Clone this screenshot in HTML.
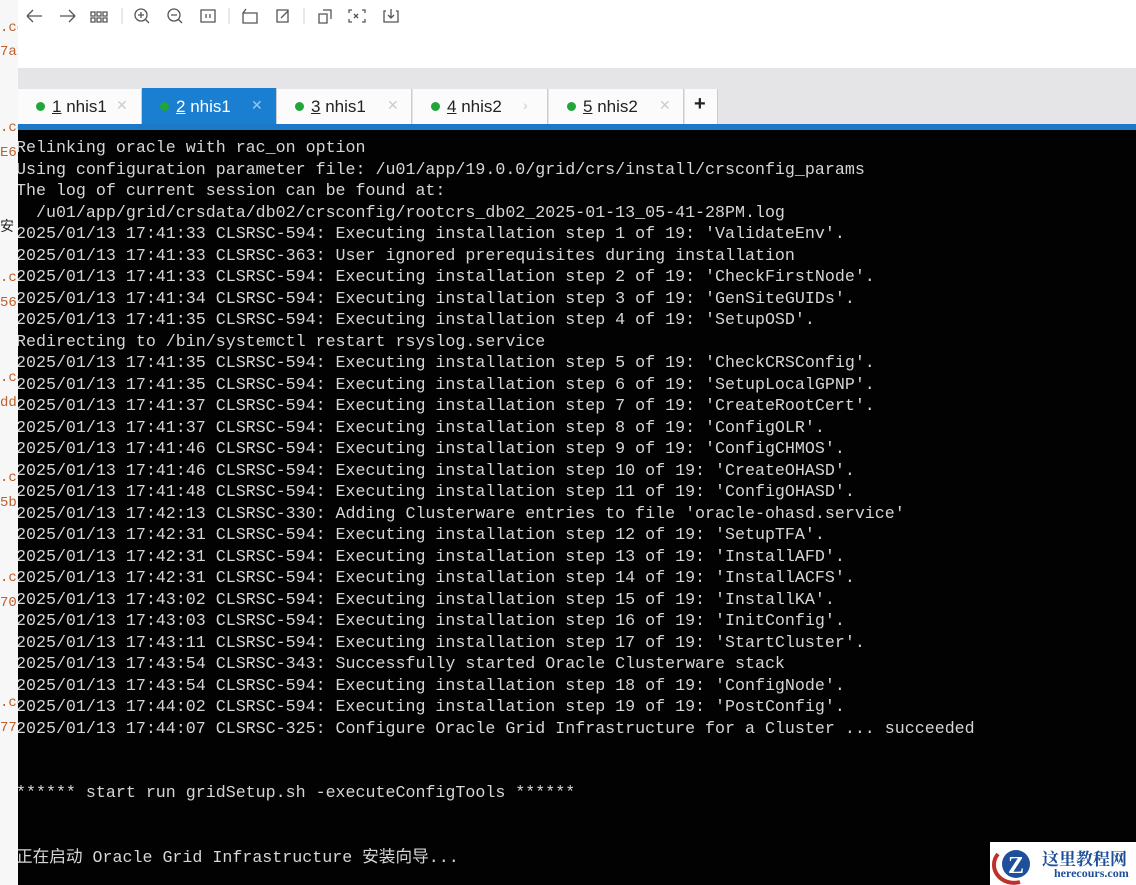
<!DOCTYPE html>
<html><head><meta charset="utf-8"><style>
body{margin:0;width:1136px;height:885px;overflow:hidden;background:#fff;position:relative;font-family:"Liberation Sans",sans-serif}
.strip{position:absolute;left:0;top:0;width:18px;height:885px;background:#f7f7f7;overflow:hidden;font-family:"Liberation Mono",monospace;font-size:14px;color:#c0602a}
.strip div{position:absolute;left:0;white-space:nowrap}
.tb{position:absolute;left:0;top:0;width:1136px;height:68px}
.tb svg{position:absolute;top:6px}
.band{position:absolute;left:18px;top:68px;width:1118px;height:57px;background:#e5e5e7}
.tab{position:absolute;top:89px;height:35px;background:#fbfbfb;border-right:1px solid #ccc;font-size:17px;color:#222}
.tab .d{position:absolute;left:18px;top:13px;width:9px;height:9px;border-radius:50%;background:#1fa53a}
.tab .t{position:absolute;left:34px;top:8px}
.tab .x{position:absolute;top:8px;color:#ccc;font-size:14px}
.tab.a{background:#1a7fd0;color:#fff;top:88px;height:37px}
.tab.a .x{color:#9cc8ee}
.blue{position:absolute;left:18px;top:124px;width:1118px;height:6px;background:#1e78c8}
.term{position:absolute;left:18px;top:130px;width:1118px;height:755px;background:#020202;overflow:hidden}
pre{margin:0;position:absolute;left:-2px;top:7px;font-family:"Liberation Mono","Noto Sans CJK SC",monospace;font-size:16.65px;line-height:21.5px;color:#d6d6d6}
.logo{position:absolute;left:990px;top:842px;width:146px;height:43px;background:#fff}
</style></head><body>
<div class="strip">
<div style="top:20px">.co</div><div style="top:44px">7a1</div><div style="top:120px">.co</div><div style="top:145px">E62</div>
<div style="top:216px;color:#222;font-family:'Noto Sans CJK SC'">安</div><div style="top:270px">.co</div><div style="top:295px">562</div>
<div style="top:370px">.co</div><div style="top:395px">dd</div><div style="top:470px">.co</div><div style="top:495px">5b</div>
<div style="top:570px">.co</div><div style="top:595px">70</div><div style="top:695px">.co</div><div style="top:720px">77</div>
</div>
<div class="tb">
<svg width="420" height="20" viewBox="0 0 420 20" style="left:0" fill="none" stroke="#555" stroke-width="1.3">
<path d="M27 10h15M27 10l6-6M27 10l6 6"/>
<path d="M60 10h15M75 10l-6-6M75 10l-6 6"/>
<path d="M91 6h4v4h-4zM97 6h4v4h-4zM103 6h4v4h-4zM91 12h4v4h-4zM97 12h4v4h-4zM103 12h4v4h-4z"/>
<path d="M122 2v16" stroke="#ddd"/>
<circle cx="141" cy="9" r="6"/><path d="M145 13l4 4M138 9h6M141 6v6"/>
<circle cx="174" cy="9" r="6"/><path d="M178 13l4 4M171 9h6"/>
<path d="M201 4h14v12h-14zM206 8v4M210 8v4"/>
<path d="M229 2v16" stroke="#ddd"/>
<path d="M243 7h14v10h-14zM243 7l3-4"/>
<path d="M277 4h11v12h-11zM281 12l7-7"/>
<path d="M304 2v16" stroke="#ddd"/>
<path d="M319 8h8v9h-8zM323 4h8v9"/>
<path d="M352 4h-3v3M362 4h3v3M352 16h-3v-3M362 16h3v-3M354 8l4 4M358 8l-4 4"/>
<path d="M386 5h-2v11h14v-11h-2M391 3v9M388 9l3 3 3-3"/>
</svg>
</div>
<div class="band"></div>
<div class="tab" style="left:18px;width:123px"><span class="d"></span><span class="t"><u>1</u> nhis1</span><span class="x" style="left:98px">✕</span></div>
<div class="tab a" style="left:142px;width:134px"><span class="d" style="top:14px"></span><span class="t" style="top:9px"><u>2</u> nhis1</span><span class="x" style="left:109px;top:9px">✕</span></div>
<div class="tab" style="left:277px;width:134px"><span class="d"></span><span class="t"><u>3</u> nhis1</span><span class="x" style="left:110px">✕</span></div>
<div class="tab" style="left:413px;width:134px"><span class="d"></span><span class="t"><u>4</u> nhis2</span><span class="x" style="left:110px">›</span></div>
<div class="tab" style="left:549px;width:134px"><span class="d"></span><span class="t"><u>5</u> nhis2</span><span class="x" style="left:110px">✕</span></div>
<div class="tab" style="left:685px;width:32px;font-size:20px;font-weight:bold"><span style="position:absolute;left:9px;top:4px">+</span></div>
<div class="blue"></div>
<div class="term"><pre>Relinking oracle with rac_on option
Using configuration parameter file: /u01/app/19.0.0/grid/crs/install/crsconfig_params
The log of current session can be found at:
  /u01/app/grid/crsdata/db02/crsconfig/rootcrs_db02_2025-01-13_05-41-28PM.log
2025/01/13 17:41:33 CLSRSC-594: Executing installation step 1 of 19: 'ValidateEnv'.
2025/01/13 17:41:33 CLSRSC-363: User ignored prerequisites during installation
2025/01/13 17:41:33 CLSRSC-594: Executing installation step 2 of 19: 'CheckFirstNode'.
2025/01/13 17:41:34 CLSRSC-594: Executing installation step 3 of 19: 'GenSiteGUIDs'.
2025/01/13 17:41:35 CLSRSC-594: Executing installation step 4 of 19: 'SetupOSD'.
Redirecting to /bin/systemctl restart rsyslog.service
2025/01/13 17:41:35 CLSRSC-594: Executing installation step 5 of 19: 'CheckCRSConfig'.
2025/01/13 17:41:35 CLSRSC-594: Executing installation step 6 of 19: 'SetupLocalGPNP'.
2025/01/13 17:41:37 CLSRSC-594: Executing installation step 7 of 19: 'CreateRootCert'.
2025/01/13 17:41:37 CLSRSC-594: Executing installation step 8 of 19: 'ConfigOLR'.
2025/01/13 17:41:46 CLSRSC-594: Executing installation step 9 of 19: 'ConfigCHMOS'.
2025/01/13 17:41:46 CLSRSC-594: Executing installation step 10 of 19: 'CreateOHASD'.
2025/01/13 17:41:48 CLSRSC-594: Executing installation step 11 of 19: 'ConfigOHASD'.
2025/01/13 17:42:13 CLSRSC-330: Adding Clusterware entries to file 'oracle-ohasd.service'
2025/01/13 17:42:31 CLSRSC-594: Executing installation step 12 of 19: 'SetupTFA'.
2025/01/13 17:42:31 CLSRSC-594: Executing installation step 13 of 19: 'InstallAFD'.
2025/01/13 17:42:31 CLSRSC-594: Executing installation step 14 of 19: 'InstallACFS'.
2025/01/13 17:43:02 CLSRSC-594: Executing installation step 15 of 19: 'InstallKA'.
2025/01/13 17:43:03 CLSRSC-594: Executing installation step 16 of 19: 'InitConfig'.
2025/01/13 17:43:11 CLSRSC-594: Executing installation step 17 of 19: 'StartCluster'.
2025/01/13 17:43:54 CLSRSC-343: Successfully started Oracle Clusterware stack
2025/01/13 17:43:54 CLSRSC-594: Executing installation step 18 of 19: 'ConfigNode'.
2025/01/13 17:44:02 CLSRSC-594: Executing installation step 19 of 19: 'PostConfig'.
2025/01/13 17:44:07 CLSRSC-325: Configure Oracle Grid Infrastructure for a Cluster ... succeeded


****** start run gridSetup.sh -executeConfigTools ******


正在启动 Oracle Grid Infrastructure 安装向导...</pre></div>
<div class="logo">
<svg width="50" height="43" style="position:absolute;left:0;top:0"><path d="M8 12 A20 18 0 0 0 30 40" stroke="#c0302a" stroke-width="4" fill="none"/><circle cx="26" cy="22" r="14" fill="#1f4f9a"/><text x="18" y="31" font-family="Liberation Serif" font-weight="bold" font-size="24" fill="#fff">Z</text></svg>
<div style="position:absolute;left:52px;top:3px;font-family:'Noto Serif CJK SC',serif;font-weight:bold;font-size:17px;color:#1f4f9a">这里教程网</div>
<div style="position:absolute;left:64px;top:24px;font-family:'Liberation Serif',serif;font-weight:bold;font-size:12px;color:#1f4f9a">herecours.com</div>
</div>
</body></html>
